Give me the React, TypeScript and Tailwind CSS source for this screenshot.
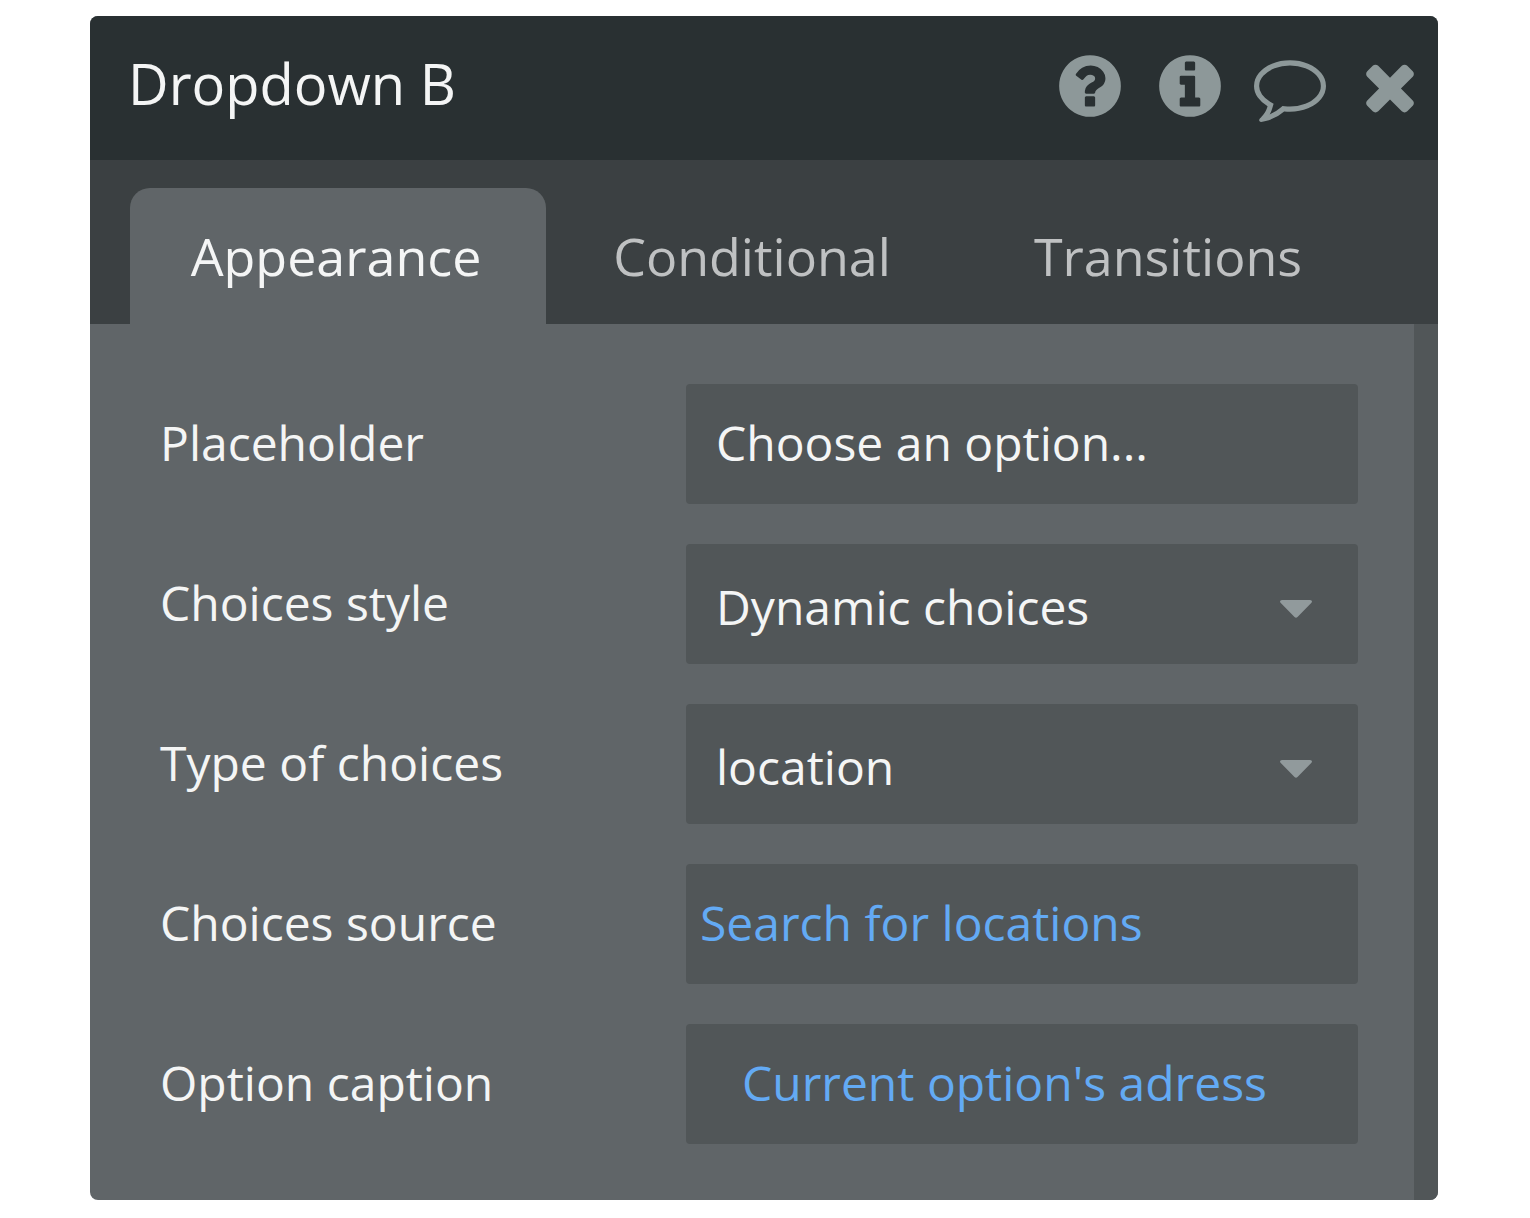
import { useState } from 'react';
import type { ReactNode } from 'react';

const TABS = ['Appearance', 'Conditional', 'Transitions'];

const ICONS = [
    {
        label: 'Help',
        path: 'M1024 1376v-192q0-14-9-23t-23-9h-192q-14 0-23 9t-9 23v192q0 14 9 23t23 9h192q14 0 23-9t9-23zm256-672q0-88-55.5-163t-138.5-116-170-41q-243 0-371 213-15 24 8 42l132 100q7 6 19 6 16 0 25-12 53-68 86-92 34-24 86-24 48 0 85.5 26t37.5 59q0 38-20 61t-68 45q-63 28-115.5 86.5t-52.5 125.5v36q0 14 9 23t23 9h192q14 0 23-9t9-23q0-19 21.5-49.5t54.5-49.5q32-18 49-28.5t46-35 44.5-48 28-60.5 12.5-81zm384 192q0 209-103 385.5t-279.5 279.5-385.5 103-385.5-103-279.5-279.5-103-385.5 103-385.5 279.5-279.5 385.5-103 385.5 103 279.5 279.5 103 385.5z',
    },
    {
        label: 'Info',
        path: 'M1152 1376v-160q0-14-9-23t-23-9h-96v-512q0-14-9-23t-23-9h-320q-14 0-23 9t-9 23v160q0 14 9 23t23 9h96v320h-96q-14 0-23 9t-9 23v160q0 14 9 23t23 9h448q14 0 23-9t9-23zm-128-896v-160q0-14-9-23t-23-9h-192q-14 0-23 9t-9 23v160q0 14 9 23t23 9h192q14 0 23-9t9-23zm640 416q0 209-103 385.5t-279.5 279.5-385.5 103-385.5-103-279.5-279.5-103-385.5 103-385.5 279.5-279.5 385.5-103 385.5 103 279.5 279.5 103 385.5z',
    },
    {
        label: 'Comments',
        path: 'M896 384q-204 0-381.5 69.5t-282 187.5-104.5 255q0 112 71.5 213.5t201.5 175.5l87 50-27 96q-24 91-70 172 152-63 275-171l43-38 57 6q69 8 130 8 204 0 381.5-69.5t282-187.5 104.5-255-104.5-255-282-187.5-381.5-69.5zm896 512q0 174-120 321.5t-326 233-450 85.5q-70 0-145-8-198 175-460 242-49 14-114 22h-5q-15 0-27-10.5t-16-27.5v-1q-3-4-.5-12t2-10 4.5-9.5l6-9 7-8.5 8-9q7-8 31-34.5t34.5-38 31-39.5 32.5-51 27-59 26-76q-157-89-247.5-220t-90.5-281q0-174 120-321.5t326-233 450-85.5 450 85.5 326 233 120 321.5z',
    },
    {
        label: 'Close',
        path: 'M1490 1322q0 40-28 68l-136 136q-28 28-68 28t-68-28l-294-294-294 294q-28 28-68 28t-68-28l-136-136q-28-28-28-68t28-68l294-294-294-294q-28-28-28-68t28-68l136-136q28-28 68-28t68 28l294 294 294-294q28-28 68-28t68 28l136 136q28 28 28 68t-28 68l-294 294 294 294q28 28 28 68z',
    },
];

interface RowProps {
    id: string;
    label: string;
    children: ReactNode;
}

function Row({ id, label, children }: RowProps) {
    return (
        <div className="flex items-center">
            <label htmlFor={id} className="w-[526px] shrink-0 pb-0.5 whitespace-nowrap">{label}</label>
            <div className="relative h-[120px] min-w-0 flex-1 rounded-sm bg-[#515658]">{children}</div>
        </div>
    );
}

function SelectField({ id, options }: { id: string; options: string[] }) {
    return (
        <>
            <select id={id} className="h-full w-full appearance-none rounded-sm pt-1.5 pr-24 pl-[30px] outline-none">
                {options.map((option) => (
                    <option key={option}>{option}</option>
                ))}
            </select>
            <svg className="pointer-events-none absolute top-14 right-[46px] h-[18px] w-8" viewBox="0 0 32 18" fill="#919a9c">
                <path d="M2 0h28q2 0 2 1.500 0 .8-.8 1.600L17.500 17q-1.500 1.400-3 0L.8 3.100Q0 2.300 0 1.500 0 0 2 0z" />
            </svg>
        </>
    );
}

export default function App() {
    const [activeTab, setActiveTab] = useState('Appearance');
    const [placeholder, setPlaceholder] = useState('Choose an option...');

    return (
        <div className="bg-white py-4 pr-[92px] pl-[90px] font-['Open_Sans',sans-serif] text-[#f4f5f5]">
            <section className="overflow-hidden rounded-lg bg-[#606568]">
                <header className="flex h-36 items-center justify-between bg-[#293032] pr-3 pb-1 pl-[38px]">
                    <h1 className="pb-1.5 text-[56px] leading-[72px]">Dropdown B</h1>
                    <div className="flex gap-7 text-[#8d9899]">
                        {ICONS.map((icon) => (
                            <button key={icon.label} type="button" aria-label={icon.label}>
                                <svg className="size-[72px]" viewBox="0 0 1792 1792" fill="currentColor">
                                    <path d={icon.path} />
                                </svg>
                            </button>
                        ))}
                    </div>
                </header>

                <div role="tablist" className="grid grid-cols-3 bg-[#3b4042] pt-7 pr-[60px] pl-10 text-[52px] leading-[72px]">
                    {TABS.map((tab) => (
                        <button
                            key={tab}
                            type="button"
                            role="tab"
                            aria-selected={tab === activeTab}
                            onClick={() => setActiveTab(tab)}
                            className={`h-[136px] rounded-t-[20px] pr-1 ${tab === activeTab ? 'bg-[#606568]' : 'text-[#bfc1c2]'}`}
                        >
                            {tab}
                        </button>
                    ))}
                </div>

                <div className="flex">
                    <div className="flex min-w-0 flex-1 flex-col gap-10 pt-[60px] pr-14 pb-14 pl-[70px] text-[48px] leading-[64px]">
                        <Row id="placeholder" label="Placeholder">
                            <input
                                id="placeholder"
                                type="text"
                                value={placeholder}
                                onChange={(e) => setPlaceholder(e.target.value)}
                                className="h-full w-full px-[30px] pb-1 outline-none"
                            />
                        </Row>
                        <Row id="choices-style" label="Choices style">
                            <SelectField id="choices-style" options={['Dynamic choices', 'Static choices']} />
                        </Row>
                        <Row id="choices-type" label="Type of choices">
                            <SelectField id="choices-type" options={['location', 'text', 'number']} />
                        </Row>
                        <Row id="choices-source" label="Choices source">
                            <button id="choices-source" type="button" className="h-full w-full pb-0.5 pl-3.5 text-left text-[#63aaf4]">
                                Search for locations
                            </button>
                        </Row>
                        <Row id="option-caption" label="Option caption">
                            <button id="option-caption" type="button" className="h-full w-full pb-0.5 pl-14 text-left text-[#63aaf4]">
                                Current option's adress
                            </button>
                        </Row>
                    </div>
                    {/* scrollbar track */}
                    <div className="w-6 shrink-0 bg-[#515658]" />
                </div>
            </section>
        </div>
    );
}
